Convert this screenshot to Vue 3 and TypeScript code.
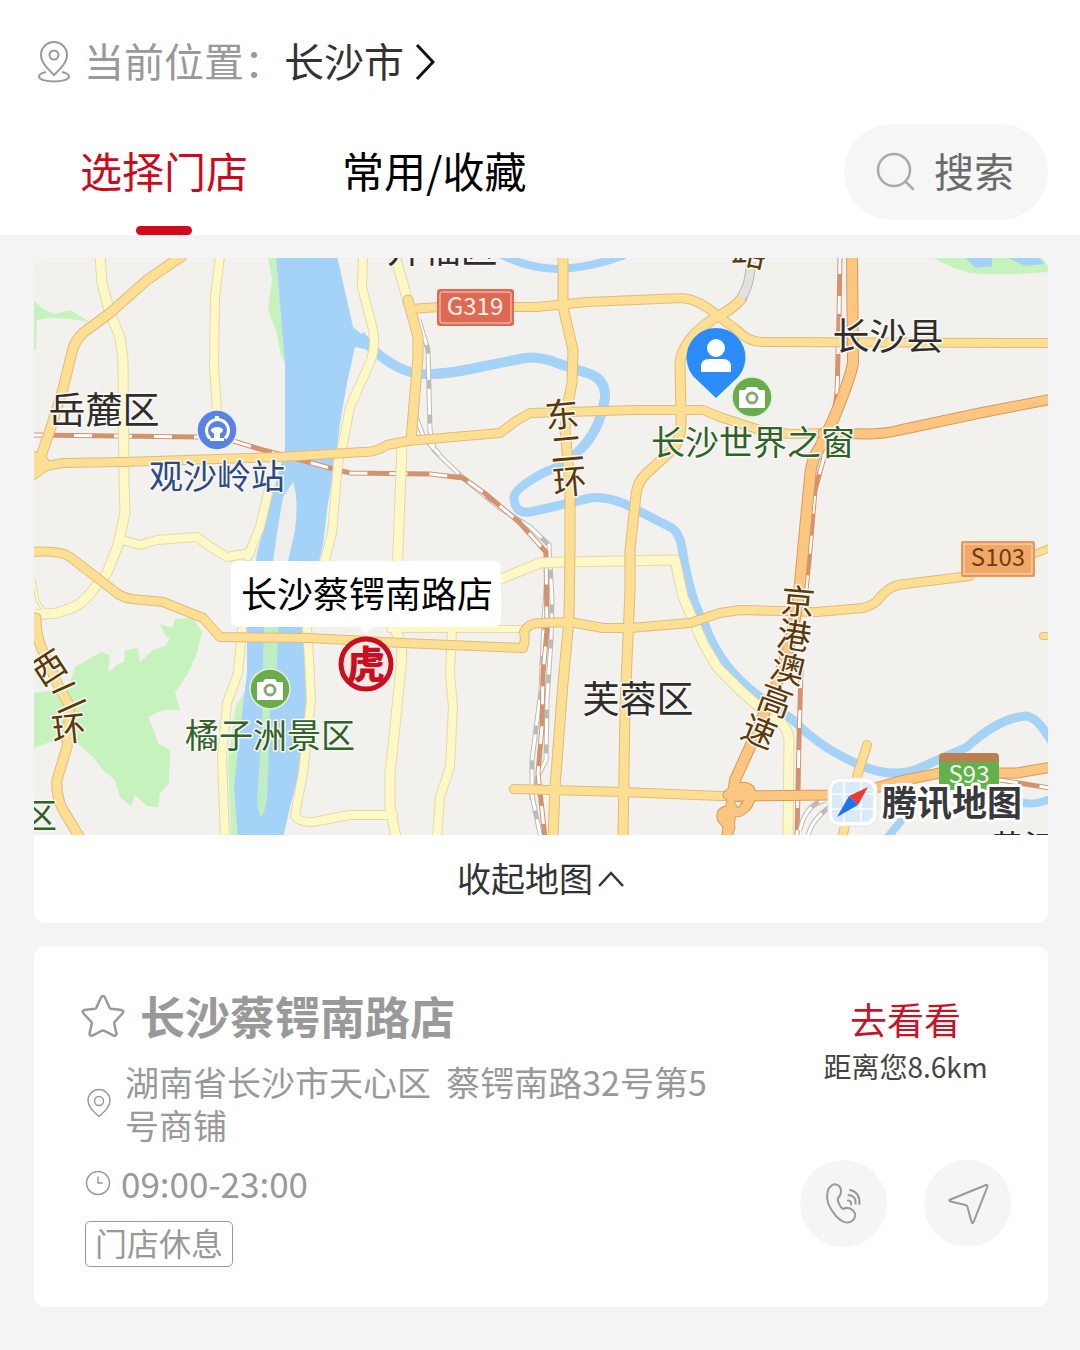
<script setup lang="ts">
import { ref } from 'vue'

type RoadKind = 'local' | 'main' | 'highway'
interface Road { kind: RoadKind; d: string; w: number }
interface Label { text: string; x: number; y: number; tone: string; size: number; rotate?: number }

const tabs = ['选择门店', '常用/收藏']
const activeTab = ref(0)
const mapOpen = ref(true)

const roads: Road[] = [
  { kind: 'local', w: 9, d: 'M100 256L102 283L110 313L120 337L123 360L124 483L125 513L118 545L107 573L93 590Q84 602 74 607L57 613L32 615' },
  { kind: 'local', w: 2, d: 'M34 580L37 600L45 612' },
  { kind: 'local', w: 8, d: 'M122 540L140 545L157 540L197 537L212 548L227 557L250 553' },
  { kind: 'local', w: 8, d: 'M220 256L215 297L214 367L217 410' },
  { kind: 'local', w: 8, d: 'M269 488L260 527L248 556M242 630L238 673L227 703L222 757L225 838' },
  { kind: 'local', w: 8, d: 'M363 256L362 287L373 330Q376 346 371 360L350 407L343 443L338 463L332 533L325 560L307 628L309 657L311 700L303 773L295 815Q297 822 313 822L350 815L393 815' },
  { kind: 'local', w: 9, d: 'M395 256L409 305M402 445L398 550L395 630Q402 640 402 657L395 727L390 773L390 807L396 838' },
  { kind: 'local', w: 8, d: 'M452 630L450 673L453 707L450 767L440 797L437 838' },
  { kind: 'local', w: 9, d: 'M498 580L540 563L563 562L675 560L683 597L703 643L717 667L743 693L763 710Q788 722 789 740L788 838' },
  { kind: 'local', w: 6, d: 'M390 629L525 629' },
  { kind: 'main', w: 9, d: 'M182 256L147 280L110 313L83 333Q74 342 72 352L62 393L50 430L38 465' },
  { kind: 'main', w: 18, d: 'M30 460L40 464' },
  { kind: 'main', w: 8, d: 'M32 476L46 466L63 463L123 462L280 457L363 452Q374 453 387 445L407 441L500 433L516 421L530 413L637 410L703 410L720 417L760 430L790 434L823 433' },
  { kind: 'main', w: 8, d: 'M32 552Q60 550 70 557L100 580L118 594Q124 598 132 599L163 602L203 618L220 637L310 638L403 643L523 648Q526 640 524 632Q528 623 540 623L570 622L603 628L630 628L690 623L720 613L740 610L817 612L863 608Q872 606 878 600Q890 584 905 584L970 576' },
  { kind: 'main', w: 6, d: 'M1030 556L1052 547M1043 636L1052 636' },
  { kind: 'main', w: 9, d: 'M563 256L563 307L573 350L572 383L568 403L565 430L570 483L570 550L569 620L563 683L555 787L553 838' },
  { kind: 'main', w: 9, d: 'M408 300L418 337L418 357L411 440' },
  { kind: 'main', w: 8, d: 'M410 309L440 307L537 307L587 302L683 298Q700 300 718 316L737 330Q748 342 762 342L1052 343' },
  { kind: 'main', w: 9, d: 'M742 298Q735 308 713 319Q682 340 680 363L681 417Q682 440 672 450L647 473Q637 482 636 495L630 550L630 590L625 707L623 838' },
  { kind: 'main', w: 8, d: 'M514 789L623 792L720 796L790 796' },
  { kind: 'main', w: 8, d: 'M867 745L858 773L842 838' },
  { kind: 'main', w: 9, d: 'M36 618Q36 640 45 655L57 683L70 707L67 747L57 780Q56 795 62 808L80 838' },
  { kind: 'highway', w: 10, d: 'M852 256L853 363Q850 380 833 420L820 447Q811 460 810 477L804 540L800 583Q796 630 777 683L750 747L735 780L727 838' },
  { kind: 'highway', w: 9, d: 'M823 433L865 434Q885 434 900 430L980 413L1052 399' },
  { kind: 'highway', w: 9, d: 'M733 796L830 795Q862 793 900 781L940 773L1017 773L1052 767' },
  { kind: 'highway', w: 9, d: 'M728 795Q742 783 750 790Q752 806 738 812Q720 808 722 818L730 828' },
]

const labels: Label[] = [
  { text: '岳麓区', x: 104, y: 424, tone: 'dark', size: 37 },
  { text: '开福区', x: 442, y: 263, tone: 'dark', size: 37 },
  { text: '长沙县', x: 888, y: 350, tone: 'dark', size: 37 },
  { text: '芙蓉区', x: 638, y: 713, tone: 'dark', size: 37 },
  { text: '黄江', x: 1024, y: 860, tone: 'dark', size: 34 },
  { text: '观沙岭站', x: 217, y: 489, tone: 'blue', size: 34 },
  { text: '长沙世界之窗', x: 753, y: 455, tone: 'green', size: 34 },
  { text: '橘子洲景区', x: 270, y: 748, tone: 'green', size: 34 },
  { text: '区', x: 40, y: 828, tone: 'green', size: 34 },
  { text: '东', x: 562, y: 415, tone: 'brown', size: 34, rotate: -5 },
  { text: '二', x: 567, y: 449, tone: 'brown', size: 34, rotate: -5 },
  { text: '环', x: 570, y: 482, tone: 'brown', size: 34, rotate: -5 },
  { text: '西', x: 49, y: 668, tone: 'brown', size: 34, rotate: -33 },
  { text: '二', x: 68, y: 697, tone: 'brown', size: 34, rotate: -24 },
  { text: '环', x: 69, y: 729, tone: 'brown', size: 34, rotate: -6 },
  { text: '路', x: 750, y: 253, tone: 'brown', size: 34, rotate: 12 },
  { text: '京', x: 798, y: 602, tone: 'brown', size: 34, rotate: 5 },
  { text: '港', x: 794, y: 636, tone: 'brown', size: 34, rotate: 9 },
  { text: '澳', x: 788, y: 669, tone: 'brown', size: 34, rotate: 14 },
  { text: '高', x: 775, y: 701, tone: 'brown', size: 34, rotate: 20 },
  { text: '速', x: 759, y: 732, tone: 'brown', size: 34, rotate: 22 },
]

const cameras = [{ x: 752, y: 397 }, { x: 270, y: 689 }]

const rails = [
  'M34 435L197 437L230 440L263 450L290 457L330 468L350 473L430 474L463 478L487 495L520 523L546 552L547 630L543 673L542 727L538 773L545 838',
  'M840 256L839 317L837 393L834 415',
  'M824 457L815 490L810 550L806 590M801 670L799 740L797 838',
]
const sidings = [
  'M419 320L428 350L430 430L434 450L463 478L500 508L530 527L549 545L552 600L551 640L547 700L546 760L531 790L536 815L541 838',
  'M414 412L424 438L440 455M548 560L544 620L541 690L532 760L532 800',
]
</script>

<template>
  <div class="page">
    <header class="top">
      <div class="place">
        <svg class="place-pin" viewBox="0 0 34 42" aria-hidden="true">
          <path d="M17 34C11 28 4 21.500 4 14a13 13 0 0 1 26 0C30 21.500 23 28 17 34Z" />
          <circle cx="17" cy="14" r="4.500" />
          <path d="M9 31C4 32 2 33.500 2 35.500C2 38.500 9 40.500 17 40.500S32 38.500 32 35.500C32 33.500 30 32 25 31" />
        </svg>
        <span class="place-text muted">当前位置：</span>
        <button class="city" type="button">
          <span class="place-text">长沙市</span>
          <svg class="city-arrow" viewBox="0 0 20 38" aria-hidden="true"><path d="M2 2L18 19L2 36" /></svg>
        </button>
      </div>
      <div class="bar">
        <nav class="tabs">
          <button
            v-for="(tab, i) in tabs"
            :key="tab"
            type="button"
            class="tab"
            :class="{ active: activeTab === i }"
            @click="activeTab = i"
          >{{ tab }}</button>
        </nav>
        <button class="search" type="button">
          <svg viewBox="0 0 40 40" aria-hidden="true"><circle cx="18" cy="18" r="16" /><path d="M29.500 29.500L37 37" /></svg>
          <span>搜索</span>
        </button>
      </div>
    </header>

    <main class="content">
      <section class="card map-card">
        <svg v-if="mapOpen" class="map" viewBox="34 258 1014 577" role="img" aria-label="门店地图">
          <rect x="34" y="258" width="1014" height="577" fill="#f2f1ee" />

          <g class="park">
            <path d="M34 301L45 310L55 314L70 310L90 322L70 319L50 318L37 320L36 350H34Z" />
            <path d="M930 256Q950 268 970 273Q1000 276 1048 272V256Z" />
            <path d="M268 256H277L286 365L281 355L276 330L268 310L272 280Z" />
            <path d="M175 619L172 628L160 624L165 635L170 638L165 646L153 650L140 662L138 648L125 650L124 662L118 664L108 673L110 655L101 652L92 657L75 667L68 688L34 693V748L50 742L77 743L93 757L103 770L115 780L120 797L131 806L135 795L147 806L158 807L160 793L169 783L170 750L158 743L153 728L148 717L163 710H180L175 692L187 675L197 653L202 632L193 618Z" />
            <path d="M246 690L236 706L228 760L231 838H242L236 787Z" />
          </g>

          <g class="lake">
            <path d="M276 256H337L353 327L370 341L373 351L355 347L347 383L340 423L335 463L328 503L323 545L303 627L307 707L299 773L290 807L283 838H238L234 787L240 730L247 673L247 627L257 553L273 493L285 450L285 363L282 327Z" />
            <path d="M966 258H992V266L975 268ZM1006 257H1040L1044 264L1025 266Z" />
          </g>
          <path d="M293 482Q299 500 295 530L288 562H273L277 533L283 497Z" fill="#eeefed" />
          <path class="island" d="M267 562H288L278 627L277 667L270 713L267 800Q260 833 257 800L262 727L263 657Z" />

          <g class="stream">
            <path stroke-width="10" d="M360 335Q382 363 410 372Q430 378 480 367L525 358Q540 356 560 364L590 374Q606 380 605 398Q600 430 580 450" />
            <path stroke-width="9" d="M580 449Q570 463 545 472Q515 488 514 497Q514 514 530 512L548 508L590 498Q605 496 625 504L672 528Q680 534 682 548Q690 600 705 625Q720 668 760 697L793 720Q820 748 860 765Q890 778 915 770L967 747Q1000 717 1027 716Q1038 718 1052 742" />
            <path stroke-width="8" d="M500 254Q527 268 557 269Q590 268 625 255M887 838L906 815M1015 800Q1030 808 1052 798" />
          </g>

          <g class="rails">
            <path v-for="d in sidings" :key="d" class="siding-edge" :d="d" />
            <path v-for="d in sidings" :key="d + 'f'" class="siding-fill" :d="d" />
            <path v-for="d in rails" :key="d" class="rail-edge" :d="d" />
            <path v-for="d in rails" :key="d + 'f'" class="rail-fill" :d="d" />
            <path class="siding-edge" d="M800 830Q805 805 825 800M808 835Q814 815 838 802" />
            <path class="siding-fill" d="M800 830Q805 805 825 800M808 835Q814 815 838 802" />
            <path class="rail-edge" d="M1000 780L1050 788" />
            <path class="rail-fill" d="M1000 780L1050 788" />
          </g>

          <g v-for="kind in ['local', 'main', 'highway']" :key="kind" class="roads" :class="kind">
            <path v-for="r in roads.filter(r => r.kind === kind)" :key="r.d" class="edge" :d="r.d" :stroke-width="r.w + 2" />
            <path v-for="r in roads.filter(r => r.kind === kind)" :key="r.d + 'f'" class="fill" :d="r.d" :stroke-width="r.w" />
          </g>
          <path d="M751 262Q750 286 741 298" fill="none" stroke="#b9b7b5" stroke-width="10" />
          <path d="M751 262Q750 286 741 298" fill="none" stroke="#e3e1de" stroke-width="8" />
          <path d="M734 801L742 802L738 808Z" fill="#f2f1ee" stroke="#d99a60" />

          <!-- road number plates -->
          <g class="plate">
            <rect x="437" y="289" width="77" height="37" rx="3" fill="#dd6a54" />
            <rect x="440" y="292" width="71" height="31" rx="2" fill="none" stroke="#f8d3c8" />
            <text x="475" y="315" fill="#fff0e4">G319</text>
            <rect x="961" y="541" width="74" height="36" rx="2" fill="#e09a60" />
            <rect x="964" y="544" width="68" height="30" fill="#f3a868" stroke="#fbe0c4" />
            <text x="998" y="566" fill="#6b3d10">S103</text>
            <path d="M939 763V757Q939 753 943 753H995Q999 753 999 757V763Z" fill="#b98150" />
            <rect x="939" y="762" width="60" height="28" fill="#62b14d" />
            <text x="969" y="783" fill="#f2fbe9">S93</text>
          </g>

          <template v-for="l in labels" :key="l.text + l.x">
            <text
              v-if="l.rotate"
              class="label"
              :class="l.tone"
              :font-size="l.size"
              :transform="`translate(${l.x} ${l.y}) rotate(${l.rotate})`"
              y="12"
            >{{ l.text }}</text>
            <text v-else class="label" :class="l.tone" :font-size="l.size" :x="l.x" :y="l.y">{{ l.text }}</text>
          </template>

          <!-- metro station -->
          <circle cx="217" cy="430" r="20" fill="#5a83df" stroke="#eaf0fc" stroke-width="1.500" />
          <path d="M210 438.500A11 11 0 1 1 225 438.500" fill="none" stroke="#fff" stroke-width="3" />
          <path d="M215 416h4v4h-4zM211 429q6-4 12 0q0 4-3 4v5h4v3h-14v-3h4v-5q-3 0-3-4z" fill="#fff" />

          <!-- scenic spots -->
          <g v-for="c in cameras" :key="c.x" :transform="`translate(${c.x} ${c.y})`">
            <circle r="20" fill="#6aac4c" stroke="#e2f2da" stroke-width="1.500" />
            <path d="M-12-7H-7L-5-10H5L7-7H12Q13-7 13-6V10Q13 11 12 11H-12Q-13 11-13 10V-6Q-13-7-12-7Z" fill="#fff" />
            <circle cy="1" r="5" fill="#fff" stroke="#86aa76" stroke-width="3" />
          </g>

          <!-- user position -->
          <path d="M716 398L697 380A29.500 29.500 0 1 1 735 380Z" fill="#2c8cf7" />
          <circle cx="716" cy="348" r="9" fill="#fff" />
          <path d="M701 372V367Q701 359 709 359H723Q731 359 731 367V372Z" fill="#fff" />

          <!-- store marker and its callout -->
          <path d="M239 561H493Q501 561 501 569V619Q501 627 493 627H373L366 633L359 627H239Q231 627 231 619V569Q231 561 239 561Z" fill="#fff" />
          <text class="callout" x="367" y="608">长沙蔡锷南路店</text>
          <circle cx="366" cy="664" r="25" fill="#fbe9e6" stroke="#c6101f" stroke-width="5" />
          <text class="tiger" x="366" y="678">虎</text>

          <!-- map provider -->
          <rect x="828" y="778" width="49" height="48" rx="11" fill="#fff" stroke="#e6e6e6" />
          <rect x="832" y="782" width="41" height="40" rx="8" fill="#d9ebf8" />
          <path d="M844 782V822M861 782V822M832 794H873M832 809H873" stroke="#f3f9fd" stroke-width="2" />
          <path d="M868 787L858 805L849 796Z" fill="#ee3a33" />
          <path d="M837 817L849 796L858 805Z" fill="#1f74ec" />
          <text class="brand" x="952" y="816">腾讯地图</text>
        </svg>
        <button class="collapse" type="button" @click="mapOpen = !mapOpen">
          <span>{{ mapOpen ? '收起地图' : '展开地图' }}</span>
          <svg :class="{ flipped: !mapOpen }" viewBox="0 0 28 20" aria-hidden="true"><path d="M2 17L14 4L26 17" /></svg>
        </button>
      </section>

      <section class="card store">
        <div class="info">
          <h2 class="name">
            <svg class="star" viewBox="0 0 44 44" aria-hidden="true">
              <path d="M20 3.500Q22 0.500 24 3.500L28.500 13.500Q29 14.500 30 14.700L40.500 16Q43.500 17 41.500 19.500L34 27.500Q33 28.500 33.300 30L35.500 39.500Q35.500 42.500 32.500 41.500L23.500 36.800Q22 36 20.500 36.800L11.500 41.500Q8.500 42.500 8.500 39.500L10.700 30Q11 28.500 10 27.500L2.500 19.500Q0.500 17 3.500 16L14 14.700Q15 14.500 15.500 13.500Z" />
            </svg>
            <span>长沙蔡锷南路店</span>
          </h2>
          <div class="line address">
            <svg class="icon" viewBox="0 0 28 30" aria-hidden="true">
              <path d="M14 28.500C8 23 3 18.500 3 12.500a11 11 0 0 1 22 0C25 18.500 20 23 14 28.500Z" /><circle cx="14" cy="13" r="4.500" />
            </svg>
            <p>湖南省长沙市天心区&nbsp; 蔡锷南路32号第5号商铺</p>
          </div>
          <div class="line hours">
            <svg class="icon" viewBox="0 0 28 28" aria-hidden="true">
              <circle cx="13" cy="14" r="11.500" /><path d="M13 7.500V14H18" />
            </svg>
            <p>09:00-23:00</p>
          </div>
          <span class="tag">门店休息</span>
        </div>
        <div class="side">
          <a class="go" href="#">去看看</a>
          <p class="distance">距离您8.6km</p>
          <div class="actions">
            <button class="round" type="button" aria-label="拨打电话">
              <svg viewBox="0 0 44 44" aria-hidden="true">
                <path d="M9 4C13 0.500 18.500 3 19 8C19.500 12 18 14 16 16C15 19 18 25 21 27C24 25.500 28 25.500 31 28.500C34.500 32 33.500 36.500 30 39C26 42 20 40.500 14 34C7 26 4 17 5.500 10C6 7 7 5.500 9 4Z" />
                <path d="M26 18.500Q30 19 29 22.500M26.500 13Q34.500 14 33.500 21.500M28 8Q38 10 37.500 22" />
              </svg>
            </button>
            <button class="round" type="button" aria-label="导航">
              <svg viewBox="0 0 44 44" aria-hidden="true"><path d="M40 3Q42 2.500 41.500 4.500L27.500 40Q26.500 42 25.500 40L21.500 25Q21 23.500 19.500 23L4.500 19.500Q2 18.500 4.500 17.500Z" /></svg>
            </button>
          </div>
        </div>
      </section>
    </main>
  </div>
</template>

<style>
body {
  margin: 0;
  background: #f4f3f6;
}
</style>

<style scoped>
.page {
  font-family: "Noto Sans CJK SC", "Noto Sans", sans-serif;
  color: #333;
}
button {
  border: 0;
  padding: 0;
  background: none;
  font: inherit;
  color: inherit;
  cursor: pointer;
}
p, h2 { margin: 0; }
svg { flex: none; }

.top { background: #fff; }
.place {
  display: flex;
  align-items: center;
  height: 124px;
  padding: 0 37px;
  font-size: 40px;
}
.place-pin {
  width: 34px;
  height: 42px;
  margin-right: 13px;
  fill: none;
  stroke: #999;
  stroke-width: 2;
}
.place-text { padding-bottom: 4px; }
.muted { color: #999; }
.city {
  display: flex;
  align-items: center;
  gap: 11px;
}
.city-arrow {
  width: 20px;
  height: 38px;
  fill: none;
  stroke: #111;
  stroke-width: 3;
}
.bar {
  display: flex;
  justify-content: space-between;
  align-items: flex-start;
  padding: 0 32px 0 80px;
}
.tabs {
  display: flex;
  gap: 94px;
}
.tab {
  height: 111px;
  padding-bottom: 19px;
  font-size: 42px;
  line-height: 92px;
  color: #000;
  position: relative;
}
.tab.active { color: #cb0a1d; }
.tab.active::after {
  content: "";
  position: absolute;
  left: 50%;
  bottom: 0;
  width: 56px;
  height: 9px;
  margin-left: -28px;
  border-radius: 5px;
  background: #d10a1b;
}
.search {
  display: flex;
  align-items: center;
  gap: 18px;
  height: 96px;
  padding: 0 34px 0 32px;
  border-radius: 48px;
  background: #f6f6f6;
  font-size: 40px;
  color: #6b6b6b;
}
.search span, .collapse span { padding-bottom: 4px; }
.search svg {
  width: 40px;
  height: 40px;
  fill: none;
  stroke: #aaa;
  stroke-width: 2.500;
  stroke-linecap: round;
}

.content {
  display: flex;
  flex-direction: column;
  gap: 23px;
  padding: 23px 32px 43px 34px;
}
.card {
  border-radius: 11px;
  background: #fff;
  overflow: hidden;
}
.map {
  display: block;
  width: 100%;
}
.park { fill: #c6f2be; }
.lake { fill: #a5d2f7; }
.island { fill: #bfedc4; }
.stream { fill: none; stroke: #a5d2f7; }
.rails { fill: none; }
.siding-edge { stroke: #bdbbb9; stroke-width: 5; }
.siding-fill { stroke: #fff; stroke-width: 3; stroke-dasharray: 26 9; }
.rail-edge { stroke: #d3936e; stroke-width: 5; }
.rail-fill { stroke: #fff; stroke-width: 3; stroke-dasharray: 18 22; }
.roads path {
  fill: none;
  stroke-linecap: round;
  stroke-linejoin: round;
}
.local .edge { stroke: #e3d9a9; }
.local .fill { stroke: #fdf8c6; }
.main .edge { stroke: #e0bb7c; }
.main .fill { stroke: #fddf93; }
.highway .edge { stroke: #d89a5c; }
.highway .fill { stroke: #fcc580; }
.map text {
  text-anchor: middle;
}
.plate text { font-size: 24px; }
.label {
  paint-order: stroke;
  stroke: #f8f7f4;
  stroke-width: 3px;
  stroke-linejoin: round;
}
.dark { fill: #2f2d2b; }
.blue { fill: #2b4a82; }
.green { fill: #2f6329; }
.brown { fill: #5c3a08; }
.callout { font-size: 36px; fill: #000; }
.tiger { font-size: 38px; font-weight: 900; fill: #c6101f; }
.brand {
  font-size: 35px;
  font-weight: 700;
  fill: #37393c;
  stroke: #fff;
  stroke-width: 6px;
  stroke-linejoin: round;
  paint-order: stroke;
}
.collapse {
  display: flex;
  justify-content: center;
  align-items: center;
  gap: 4px;
  width: 100%;
  height: 88px;
  font-size: 34px;
}
.collapse svg {
  width: 28px;
  height: 20px;
  fill: none;
  stroke: #333;
  stroke-width: 2.500;
}
.flipped { transform: rotate(180deg); }

.store {
  display: flex;
  justify-content: space-between;
  gap: 75px;
  padding: 40px 37px 40px 47px;
}
.info {
  flex: 1;
  color: #999;
}
.name {
  display: flex;
  align-items: center;
  gap: 15px;
  font-size: 45px;
  line-height: 60px;
  font-weight: 700;
}
.star {
  width: 44px;
  height: 44px;
  fill: none;
  stroke: #999;
  stroke-width: 2.500;
}
.line {
  display: flex;
  align-items: center;
  padding-left: 4px;
}
.icon {
  width: 28px;
  fill: none;
  stroke: #999;
  stroke-width: 1.500;
}
.address {
  gap: 12px;
  margin-top: 14px;
  font-size: 34px;
  line-height: 43px;
}
.hours {
  gap: 8px;
  margin: 17px 0 18px;
  font-size: 35px;
  line-height: 40px;
}
.tag {
  display: block;
  width: fit-content;
  margin-left: 4px;
  padding: 0 9px 4px;
  border: 1px solid #999;
  border-radius: 5px;
  font-size: 32px;
  line-height: 40px;
}
.side {
  display: flex;
  flex-direction: column;
  align-items: center;
  padding-top: 8px;
}
.go {
  font-size: 37px;
  line-height: 50px;
  color: #c4142a;
  text-decoration: none;
}
.distance {
  margin-top: 2px;
  font-size: 28px;
  line-height: 40px;
  color: #444;
}
.actions {
  display: flex;
  gap: 37px;
  margin-top: 74px;
}
.round {
  display: flex;
  align-items: center;
  justify-content: center;
  width: 87px;
  height: 87px;
  border-radius: 50%;
  background: #f5f5f5;
}
.round svg {
  width: 44px;
  height: 44px;
  fill: none;
  stroke: #999;
  stroke-width: 2;
  stroke-linecap: round;
}
</style>
